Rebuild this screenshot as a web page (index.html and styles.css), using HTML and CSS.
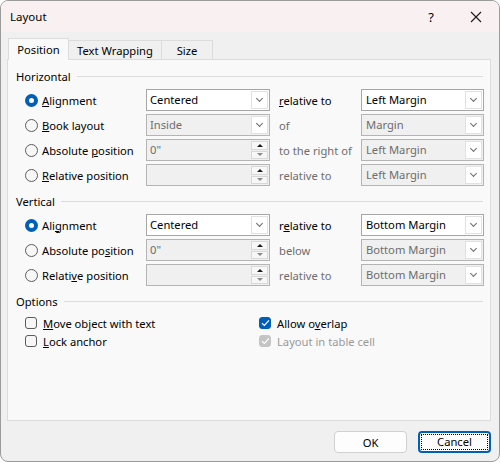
FILE: index.html
```html
<!DOCTYPE html>
<html lang="en">
<head>
  <meta charset="UTF-8">
  <title>Layout</title>
  <link rel="stylesheet" href="styles.css">
</head>
<body>
  <div class="window">
    <div class="titlebar">
      <span class="title">Layout</span>
      <span class="help">?</span>
      <span class="close">
        <svg width="12" height="12" viewBox="0 0 12 12"><path d="M1 1L11 11M11 1L1 11" stroke="#1a1a1a" stroke-width="1.1" fill="none"/></svg>
      </span>
    </div>

    <div class="main">
      <div class="tabs">
        <div class="tab active t1">Position</div>
        <div class="tab t2">Text Wrapping</div>
        <div class="tab t3">Size</div>
      </div>

      <div class="panel">
        <!-- Horizontal -->
        <div class="group-title">Horizontal</div>
        <div class="rows">
          <div class="row">
            <label class="opt"><span class="radio checked"></span><span><u>A</u>lignment</span></label>
            <div class="combo"><span class="val">Centered</span><span class="drop"></span></div>
            <span class="rel"><u>r</u>elative to</span>
            <div class="combo"><span class="val">Left Margin</span><span class="drop"></span></div>
          </div>
          <div class="row">
            <label class="opt"><span class="radio"></span><span><u>B</u>ook layout</span></label>
            <div class="combo off"><span class="val">Inside</span><span class="drop"></span></div>
            <span class="rel off">of</span>
            <div class="combo off"><span class="val">Margin</span><span class="drop"></span></div>
          </div>
          <div class="row">
            <label class="opt"><span class="radio"></span><span>Absolute <u>p</u>osition</span></label>
            <div class="combo off"><span class="val">0"</span><span class="spin"><i class="up"></i><i class="down"></i></span></div>
            <span class="rel off">to the right of</span>
            <div class="combo off"><span class="val">Left Margin</span><span class="drop"></span></div>
          </div>
          <div class="row">
            <label class="opt"><span class="radio"></span><span><u>R</u>elative position</span></label>
            <div class="combo off"><span class="val"></span><span class="spin"><i class="up"></i><i class="down"></i></span></div>
            <span class="rel off">relative to</span>
            <div class="combo off"><span class="val">Left Margin</span><span class="drop"></span></div>
          </div>
        </div>

        <!-- Vertical -->
        <div class="group-title">Vertical</div>
        <div class="rows">
          <div class="row">
            <label class="opt"><span class="radio checked"></span><span>Ali<u>g</u>nment</span></label>
            <div class="combo"><span class="val">Centered</span><span class="drop"></span></div>
            <span class="rel">r<u>e</u>lative to</span>
            <div class="combo"><span class="val">Bottom Margin</span><span class="drop"></span></div>
          </div>
          <div class="row">
            <label class="opt"><span class="radio"></span><span>Absolute po<u>s</u>ition</span></label>
            <div class="combo off"><span class="val">0"</span><span class="spin"><i class="up"></i><i class="down"></i></span></div>
            <span class="rel off">below</span>
            <div class="combo off"><span class="val">Bottom Margin</span><span class="drop"></span></div>
          </div>
          <div class="row">
            <label class="opt"><span class="radio"></span><span>Relati<u>v</u>e position</span></label>
            <div class="combo off"><span class="val"></span><span class="spin"><i class="up"></i><i class="down"></i></span></div>
            <span class="rel off">relative to</span>
            <div class="combo off"><span class="val">Bottom Margin</span><span class="drop"></span></div>
          </div>
        </div>

        <!-- Options -->
        <div class="group-title">Options</div>
        <div class="checks">
          <label class="chk"><span class="box"></span><span><u>M</u>ove object with text</span></label>
          <label class="chk"><span class="box checked"><svg width="9" height="8" viewBox="0 0 9 8"><path d="M1 4.2L3.4 6.4L8 1.4" stroke="#fff" stroke-width="1.2" fill="none"/></svg></span><span>Allow o<u>v</u>erlap</span></label>
          <label class="chk"><span class="box"></span><span><u>L</u>ock anchor</span></label>
          <label class="chk off"><span class="box checked"><svg width="9" height="8" viewBox="0 0 9 8"><path d="M1 4.2L3.4 6.4L8 1.4" stroke="#fff" stroke-width="1.2" fill="none"/></svg></span><span>Layout in table cell</span></label>
        </div>
      </div>

      <div class="footer">
        <button class="btn">OK</button>
        <button class="btn focus"><span>Cancel</span></button>
      </div>
    </div>
  </div>
</body>
</html>
```

FILE: styles.css
```css
html, body {
  margin: 0;
  background: #ffffff;
}

body {
  font-family: "Noto Sans", sans-serif;
  font-size: 11.2px;
  color: #000;
}

.window {
  width: 500px;
  height: 462px;
  box-sizing: border-box;
  border: 1px solid #9b9b9b;
  border-radius: 8px;
  overflow: hidden;
  display: flex;
  flex-direction: column;
  background: #f0f0f0;
}

/* Titelleiste */
.titlebar {
  height: 31px;
  flex: none;
  display: flex;
  align-items: center;
  background: #f9f1f1;
  padding-left: 9px;
}
.title {
  flex: 1;
  font-size: 11.5px;
}
.help {
  width: 20px;
  text-align: center;
  font-size: 13px;
  margin-right: 25px;
}
.close {
  width: 20px;
  display: flex;
  justify-content: center;
  margin-right: 13px;
}

.main {
  flex: 1;
  display: flex;
  flex-direction: column;
  padding: 6px 8px 0 6px;
}

/* Reiter */
.tabs {
  display: flex;
  align-items: flex-end;
  height: 21px;
  margin-left: 1px;
}
.tab {
  height: 19px;
  box-sizing: border-box;
  border: 1px solid #dcdcdc;
  border-bottom: none;
  display: flex;
  align-items: center;
  justify-content: center;
  background: #f0f0f0;
  margin-left: -1px;
}
.tab.active {
  height: 22px;
  background: #f9f9f9;
  margin-bottom: -1px;
  position: relative;
  z-index: 1;
  margin-left: 0;
}
.t1 { width: 61px; }
.t2 { width: 94px; }
.t3 { width: 52px; }

.panel {
  flex: 1;
  background: #f9f9f9;
  border: 1px solid #dcdcdc;
  padding: 8px 7px 0 8px;
}

.group-title {
  display: flex;
  align-items: center;
  height: 16px;
  margin-bottom: 5px;
}
.group-title::after {
  content: "";
  flex: 1;
  height: 1px;
  background: #dcdcdc;
  margin-left: 6px;
}

.rows {
  display: flex;
  flex-direction: column;
  gap: 3px;
  margin-left: 9px;
  margin-bottom: 7px;
}
.row {
  display: grid;
  grid-template-columns: 121px 124px 91px 123px;
  height: 22px;
  align-items: center;
}

.opt {
  display: flex;
  align-items: center;
  gap: 4px;
  white-space: nowrap;
}
.radio {
  width: 13px;
  height: 13px;
  flex: none;
  box-sizing: border-box;
  border: 1px solid #5c5c5c;
  border-radius: 50%;
  background: #f7f7f7;
}
.radio.checked {
  border: 4px solid #005fb8;
  background: #fff;
}

.combo {
  height: 22px;
  box-sizing: border-box;
  border: 1px solid #a6a6a6;
  background: #fff;
  display: flex;
}
.combo .val {
  flex: 1;
  padding-left: 3px;
  line-height: 20px;
}
.combo.off {
  background: #f0f0f0;
  border-color: #b4b4b4;
  color: #6d6d6d;
}
.rel {
  padding-left: 9px;
  white-space: nowrap;
}
.rel.off {
  color: #6d6d6d;
}
.row .combo:last-child .val {
  padding-left: 4px;
}

.drop {
  width: 17px;
  box-sizing: border-box;
  margin: 1px;
  border: 1px solid #e1e1e1;
  background: #fff;
  position: relative;
}
.drop::after {
  content: "";
  position: absolute;
  left: 5px;
  top: 4px;
  width: 4px;
  height: 4px;
  border-right: 1px solid #6a6a6a;
  border-bottom: 1px solid #6a6a6a;
  transform: rotate(45deg);
}

.spin {
  width: 17px;
  display: flex;
  flex-direction: column;
  margin: 1px;
  gap: 1px;
}
.spin i {
  flex: 1;
  background: #f7f7f7;
  border: 1px solid #d8d8d8;
  display: flex;
  align-items: center;
  justify-content: center;
}
.spin i::after {
  content: "";
  border-left: 3px solid transparent;
  border-right: 3px solid transparent;
}
.spin .up::after {
  border-bottom: 3px solid #1a1a1a;
}
.spin .down::after {
  border-top: 3px solid #8a8a8a;
}

/* Optionen */
.checks {
  display: grid;
  grid-template-columns: 234px 1fr;
  margin-left: 9px;
}
.chk {
  height: 18px;
  display: flex;
  align-items: center;
  gap: 6px;
  white-space: nowrap;
}
.box {
  width: 12px;
  height: 12px;
  flex: none;
  box-sizing: border-box;
  border: 1px solid #5c5c5c;
  border-radius: 3px;
  background: #f7f7f7;
  display: flex;
  align-items: center;
  justify-content: center;
}
.box.checked {
  background: #005fb8;
  border-color: #005fb8;
}
.chk.off {
  color: #9a9a9a;
}
.chk.off .box {
  background: #c4c4c4;
  border-color: #c4c4c4;
}

/* Schaltflächen */
.footer {
  height: 40px;
  flex: none;
  display: flex;
  justify-content: flex-end;
  align-items: flex-start;
  gap: 11px;
  padding-top: 10px;
  box-sizing: border-box;
}
.btn {
  width: 73px;
  height: 22px;
  font-family: inherit;
  font-size: 11.2px;
  color: #000;
  background: #fdfdfd;
  border: 1px solid #d0d0d0;
  border-radius: 4px;
  padding: 0;
}
.btn.focus {
  border: 2px solid #005fb8;
  padding: 1px;
}
.btn.focus span {
  display: block;
  height: 100%;
  box-sizing: border-box;
  border: 1px dotted #000;
  line-height: 14px;
}
```
